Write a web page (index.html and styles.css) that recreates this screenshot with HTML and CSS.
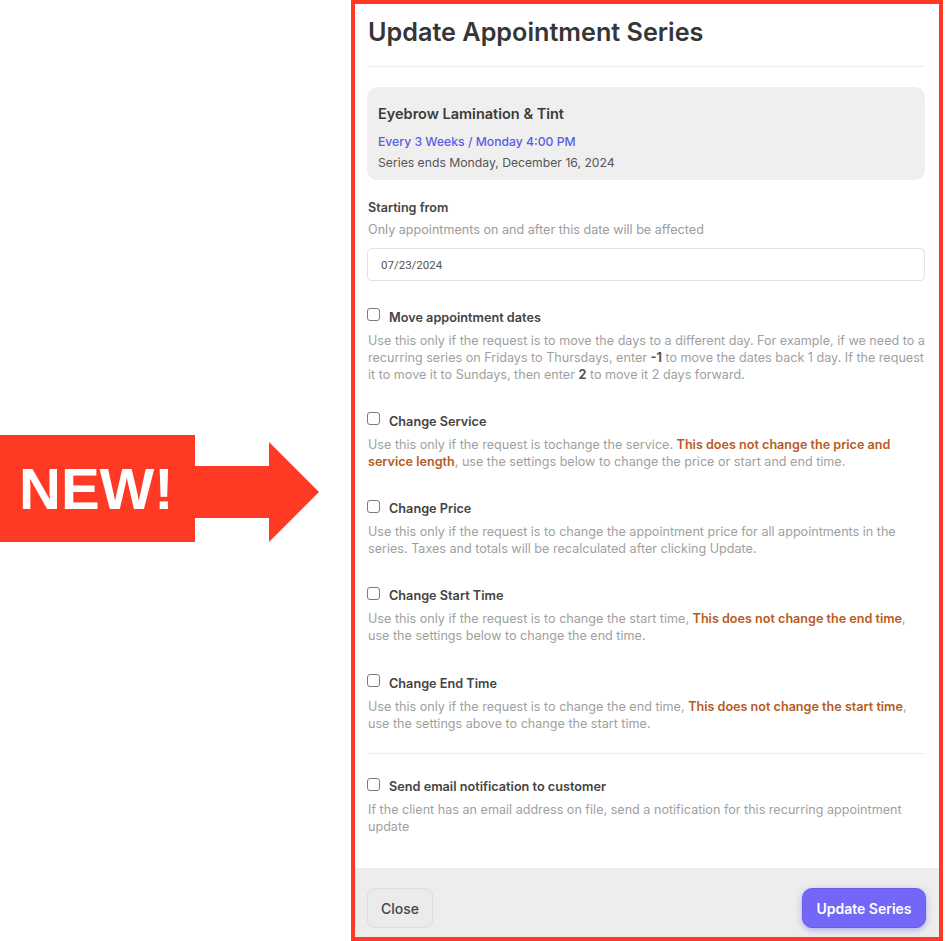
FILE: index.html
```html
<!DOCTYPE html>
<html lang="en">
<head>
    <meta charset="UTF-8">
    <title>Update Appointment Series</title>
    <link rel="stylesheet" href="styles.css">
</head>
<body>
    <div class="callout">
        <div class="new-tag">
            <div class="new-box">NEW!</div>
            <svg class="new-arrow" viewBox="0 0 124 107" width="124" height="107">
                <rect x="0" y="31" width="75" height="52" fill="#ff3a24"></rect>
                <polygon points="74,7 124,57 74,107" fill="#ff3a24"></polygon>
            </svg>
        </div>
    </div>

    <div class="modal">
        <div class="modal-body">
            <h1>Update Appointment Series</h1>
            <hr>

            <div class="series-card">
                <div class="series-name">Eyebrow Lamination &amp; Tint</div>
                <div class="series-freq">Every 3 Weeks / Monday 4:00 PM</div>
                <div class="series-end">Series ends Monday, December 16, 2024</div>
            </div>

            <div class="field-label">Starting from</div>
            <div class="field-help">Only appointments on and after this date will be affected</div>
            <input class="date-input" type="text" value="07/23/2024">

            <div class="option">
                <label><input type="checkbox"> Move appointment dates</label>
                <p>Use this only if the request is to move the days to a different day. For example, if we need to a recurring series on Fridays to Thursdays, enter <b>-1</b> to move the dates back 1 day. If the request it to move it to Sundays, then enter <b>2</b> to move it 2 days forward.</p>
            </div>

            <div class="option">
                <label><input type="checkbox"> Change Service</label>
                <p>Use this only if the request is tochange the service. <b class="warn">This does not change the price and</b> <b class="warn">service length</b>, use the settings below to change the price or start and end time.</p>
            </div>

            <div class="option">
                <label><input type="checkbox"> Change Price</label>
                <p>Use this only if the request is to change the appointment price for all appointments in the series. Taxes and totals will be recalculated after clicking Update.</p>
            </div>

            <div class="option">
                <label><input type="checkbox"> Change Start Time</label>
                <p>Use this only if the request is to change the start time, <b class="warn">This does not change the end time</b>, use the settings below to change the end time.</p>
            </div>

            <div class="option">
                <label><input type="checkbox"> Change End Time</label>
                <p>Use this only if the request is to change the end time, <b class="warn">This does not change the start time</b>, use the settings above to change the start time.</p>
            </div>

            <hr class="sep">

            <div class="option">
                <label><input type="checkbox"> Send email notification to customer</label>
                <p>If the client has an email address on file, send a notification for this recurring appointment update</p>
            </div>
        </div>

        <div class="modal-footer">
            <button class="btn-close">Close</button>
            <button class="btn-primary">Update Series</button>
        </div>
    </div>
</body>
</html>
```
FILE: styles.css
```css
/* Page */
body {
    margin: 0;
    height: 941px;
    display: flex;
    background: #ffffff;
    font-family: 'Inter', 'Noto Sans', sans-serif;
    color: #333;
    overflow: hidden;
}

/* NEW! callout */
.callout {
    width: 351px;
    padding-top: 435px;
    box-sizing: border-box;
}

.new-tag {
    display: flex;
}

.new-box {
    width: 195px;
    height: 107px;
    padding-left: 19px;
    box-sizing: border-box;
    display: flex;
    align-items: center;
    background: #ff3a24;
    color: #ffffff;
    font-family: 'Liberation Sans', Arial, sans-serif;
    font-weight: bold;
    font-size: 58px;
    line-height: 1;
}

.new-arrow {
    display: block;
}

/* Modal */
.modal {
    width: 592px;
    height: 941px;
    box-sizing: border-box;
    border: 4px solid #ff3a24;
    display: flex;
    flex-direction: column;
}

.modal-body {
    flex: 1;
    padding: 0 14px 0 12px;
}

h1 {
    margin: 13px 0 0 1px;
    font-size: 25.2px;
    line-height: 30px;
    font-weight: 600;
    color: #363636;
}

hr {
    border: none;
    border-top: 1px solid #ececec;
    margin: 19px 1px 20px;
}

/* Series card */
.series-card {
    background: #efefef;
    border-radius: 10px;
    padding: 17px 11px 8px;
}

.series-name {
    font-size: 14.5px;
    line-height: 20px;
    font-weight: 600;
    color: #3b3b3b;
}

.series-freq {
    margin-top: 9px;
    font-size: 12.2px;
    line-height: 18px;
    font-weight: 500;
    color: #5c5ce2;
}

.series-end {
    margin-top: 3px;
    font-size: 12.2px;
    line-height: 18px;
    color: #555;
}

/* Starting from */
.field-label {
    margin: 19px 0 0 1px;
    font-size: 12.6px;
    line-height: 18px;
    font-weight: 600;
    color: #444;
}

.field-help {
    margin: 4px 0 0 1px;
    font-size: 12.6px;
    line-height: 18px;
    color: #9c9c9c;
}

.date-input {
    display: block;
    width: 100%;
    height: 33px;
    box-sizing: border-box;
    margin-top: 9px;
    padding: 0 13px;
    border: 1px solid #e1e1e1;
    border-radius: 5px;
    font-family: 'Roboto', sans-serif;
    font-size: 11.5px;
    color: #555;
    outline: none;
}

/* Options */
.option {
    margin-top: 26px;
}

.option + .option {
    margin-top: 28.8px;
}

.option label {
    display: flex;
    align-items: center;
    gap: 9px;
    height: 20px;
    font-size: 12.7px;
    font-weight: 600;
    color: #444;
}

.option input[type="checkbox"] {
    appearance: none;
    -webkit-appearance: none;
    width: 13px;
    height: 13px;
    margin: -5px 0 0 0;
    border: 1.5px solid #7a7a7a;
    border-radius: 3px;
    background: #fff;
    box-sizing: border-box;
}

.option p {
    margin: 4.5px 0 0 1px;
    font-size: 12.6px;
    line-height: 17px;
    color: #9f9f9f;
}

.option p b {
    color: #555;
    font-weight: 700;
}

.option p b.warn {
    color: #b65b22;
    font-weight: 600;
}

hr.sep {
    margin: 21px 1px 0;
}

hr.sep + .option {
    margin-top: 23px;
}

/* Footer */
.modal-footer {
    background: #ededed;
    padding: 20px 13px 9px 12px;
    display: flex;
    justify-content: space-between;
}

.modal-footer button {
    height: 40px;
    font-family: 'Inter', sans-serif;
    font-size: 14px;
    cursor: pointer;
}

.btn-close {
    width: 66px;
    background: #ebebeb;
    border: 1px solid #dcdcdc;
    border-radius: 8px;
    color: #444;
    font-weight: 500;
}

.btn-primary {
    width: 124px;
    background: #7367f7;
    border: 1px solid #6a5ee6;
    border-radius: 10px;
    color: #ffffff;
    font-size: 14.5px;
    font-weight: 600;
    box-shadow: 0px 2px 6px rgba(100, 90, 240, 0.45);
}
```
